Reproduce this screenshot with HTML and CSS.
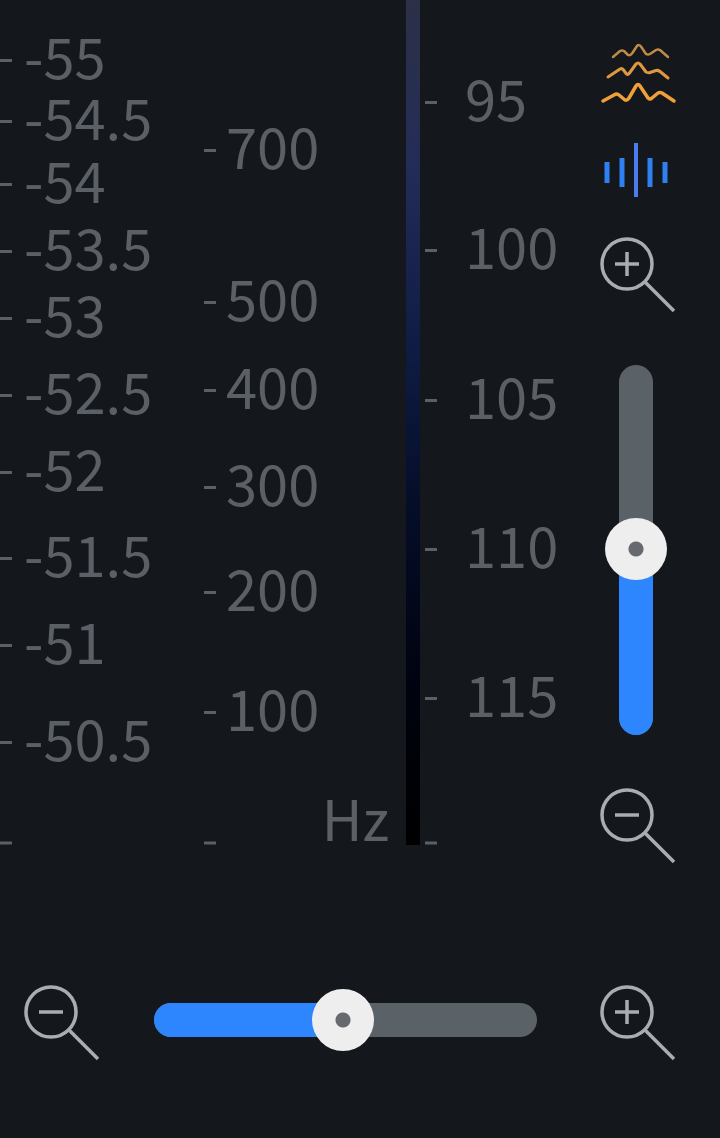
FILE: index.html
```html
<!DOCTYPE html>
<html lang="en">
<head>
    <meta charset="UTF-8">
    <meta name="viewport" content="width=device-width, initial-scale=1.0">
    <title>Spectrogram scale</title>
    <link rel="stylesheet" href="styles.css">
</head>
<body>
    <svg class="defs" width="0" height="0">
        <symbol id="zoomIn" viewBox="0 0 76 76">
            <circle cx="27" cy="27" r="25"/>
            <path d="M45 45 L74 74 M15 27 H39 M27 15 V39"/>
        </symbol>
        <symbol id="zoomOut" viewBox="0 0 76 76">
            <circle cx="27" cy="27" r="25"/>
            <path d="M45 45 L74 74 M15 27 H39"/>
        </symbol>
    </svg>

    <div class="main">
        <div class="axes">
            <div class="axis axis-db">
                <div class="tick" style="top: 60px"><i></i><span>-55</span></div>
                <div class="tick" style="top: 121px"><i></i><span>-54.5</span></div>
                <div class="tick" style="top: 184px"><i></i><span>-54</span></div>
                <div class="tick" style="top: 251px"><i></i><span>-53.5</span></div>
                <div class="tick" style="top: 318px"><i></i><span>-53</span></div>
                <div class="tick" style="top: 395px"><i></i><span>-52.5</span></div>
                <div class="tick" style="top: 472px"><i></i><span>-52</span></div>
                <div class="tick" style="top: 558px"><i></i><span>-51.5</span></div>
                <div class="tick" style="top: 645px"><i></i><span>-51</span></div>
                <div class="tick" style="top: 742px"><i></i><span>-50.5</span></div>
                <div class="tick" style="top: 843px"><i></i></div>
            </div>
            <div class="axis axis-hz">
                <div class="tick" style="top: 150px"><i></i><span>700</span></div>
                <div class="tick" style="top: 302px"><i></i><span>500</span></div>
                <div class="tick" style="top: 390px"><i></i><span>400</span></div>
                <div class="tick" style="top: 487px"><i></i><span>300</span></div>
                <div class="tick" style="top: 592px"><i></i><span>200</span></div>
                <div class="tick" style="top: 712px"><i></i><span>100</span></div>
                <div class="tick" style="top: 843px"><i></i></div>
                <div class="unit">Hz</div>
            </div>
            <div class="colorbar"></div>
            <div class="axis axis-level">
                <div class="tick" style="top: 102px"><i></i><span>95</span></div>
                <div class="tick" style="top: 250px"><i></i><span>100</span></div>
                <div class="tick" style="top: 400px"><i></i><span>105</span></div>
                <div class="tick" style="top: 549px"><i></i><span>110</span></div>
                <div class="tick" style="top: 698px"><i></i><span>115</span></div>
                <div class="tick" style="top: 843px"><i></i></div>
            </div>
        </div>

        <div class="side">
            <svg class="waves" viewBox="0 0 80 70">
                <path class="w1" d="M13 17 L20 11 Q22 10 24 11 L28 15 Q30 16 32 13.5 L37 6 Q39 4 41 6.5 L46 14 Q48 15 50 14 L56 10 Q58 9 60 10 L68 17"/>
                <path class="w2" d="M8 37 L20 29 Q22 28 23.5 30 L26.5 34 Q28 35 29.5 33 L36 24 Q38 22 40 24 L46 32 Q48 33 50 32.5 L56 30.5 Q58 30 60 31.5 L68 38"/>
                <path class="w3" d="M3 61 L14 55 Q17 53 19 55 L25 60 Q27 61 29 58 L36 46 Q38 43 40 46 L48 58 Q50 60 52 58 L58 53 Q60 52 62 53 L74 61"/>
            </svg>
            <svg class="bars" viewBox="0 0 70 54">
                <path d="M4 19 V40"/>
                <path d="M19 15 V44"/>
                <path class="mid" d="M33 0 V54"/>
                <path d="M47 15 V44"/>
                <path d="M62 19 V40"/>
            </svg>
            <svg class="zoom zoom-top"><use href="#zoomIn"/></svg>
            <div class="slider-v">
                <div class="fill"></div>
                <div class="thumb"></div>
            </div>
            <svg class="zoom zoom-low"><use href="#zoomOut"/></svg>
        </div>
    </div>

    <div class="bottom">
        <svg class="zoom"><use href="#zoomOut"/></svg>
        <div class="slider-h">
            <div class="fill"></div>
            <div class="thumb"></div>
        </div>
        <svg class="zoom"><use href="#zoomIn"/></svg>
    </div>
</body>
</html>
```

FILE: styles.css
```css
body {
    margin: 0;
    width: 720px;
    height: 1138px;
    overflow: hidden;
    background-color: #14171c;
    font-family: "Noto Sans CJK SC", "Noto Sans", sans-serif;
    color: #5b6067;
}
.defs {
    position: absolute;
}
.main {
    display: flex;
    height: 845px;
}
.axes {
    display: flex;
    width: 600px;
    flex: none;
}
.axis {
    position: relative;
    height: 845px;
}
.axis-db {
    width: 204px;
}
.axis-hz {
    width: 202px;
}
.axis-level {
    width: 180px;
}
.colorbar {
    width: 14px;
    background: linear-gradient(to bottom, #2c3148 0%, #232c57 20%, #0f1d45 40%, #050d28 60%, #000310 80%, #000 100%);
}
.tick {
    position: absolute;
    left: 0;
    display: flex;
    align-items: center;
    transform: translateY(-50%);
    font-size: 56px;
    line-height: 60px;
    white-space: nowrap;
}
.tick span {
    margin-top: -10px;
}
.tick i {
    display: block;
    width: 12px;
    height: 3px;
    background: #5b6067;
    flex: none;
}
.axis-db .tick span {
    margin-left: 12px;
}
.axis-hz .tick span {
    margin-left: 10px;
    width: 92px;
    text-align: right;
}
.axis-level .tick {
    left: 5px;
}
.axis-level .tick span {
    margin-left: 28px;
}
.unit {
    position: absolute;
    right: 17px;
    bottom: -2px;
    font-size: 56px;
    line-height: 60px;
}
.side {
    display: flex;
    flex-direction: column;
    width: 120px;
    height: 845px;
    padding-top: 40px;
    box-sizing: border-box;
    flex: none;
}
.waves {
    display: block;
    width: 80px;
    height: 70px;
    flex: none;
    fill: none;
    stroke-linejoin: round;
    stroke-linecap: round;
}
.w1 {
    stroke-width: 2.5;
    stroke: #c08a45;
}
.w2 {
    stroke-width: 3;
    stroke: #e0983f;
}
.w3 {
    stroke-width: 3.5;
    stroke: #f0a038;
}
.bars {
    display: block;
    width: 70px;
    height: 54px;
    flex: none;
    margin: 33px 0 0 3px;
    stroke: #2f80f0;
    stroke-width: 5;
}
.bars .mid {
    stroke: #4a7cf0;
    stroke-width: 4;
}
.zoom {
    display: block;
    width: 76px;
    height: 76px;
    flex: none;
    overflow: visible;
    fill: none;
    stroke: #a9acb0;
    stroke-width: 3.5;
}
.zoom-top {
    margin: 40px 0 0;
}
.zoom-low {
    margin: 53px 0 0;
}
.slider-v {
    position: relative;
    width: 34px;
    height: 370px;
    margin: 52px 0 0 19px;
    border-radius: 17px;
    background: #5a6167;
    flex: none;
}
.slider-v .fill {
    position: absolute;
    left: 0;
    right: 0;
    bottom: 0;
    height: 186px;
    border-radius: 0 0 17px 17px;
    background: #2e86ff;
}
.slider-v .thumb {
    left: 17px;
    top: 184px;
}
.thumb {
    position: absolute;
    width: 62px;
    height: 62px;
    margin: -31px 0 0 -31px;
    border-radius: 50%;
    background: radial-gradient(circle, #666a70 0, #666a70 7px, #eeeeee 8px);
}
.bottom {
    display: flex;
    align-items: flex-start;
    padding: 140px 0 0 24px;
}
.slider-h {
    position: relative;
    width: 383px;
    height: 34px;
    margin: 18px 63px 0 54px;
    border-radius: 17px;
    background: #5a6167;
}
.slider-h .fill {
    position: absolute;
    left: 0;
    top: 0;
    bottom: 0;
    width: 189px;
    border-radius: 17px 0 0 17px;
    background: #2e86ff;
}
.slider-h .thumb {
    left: 189px;
    top: 17px;
}
```
